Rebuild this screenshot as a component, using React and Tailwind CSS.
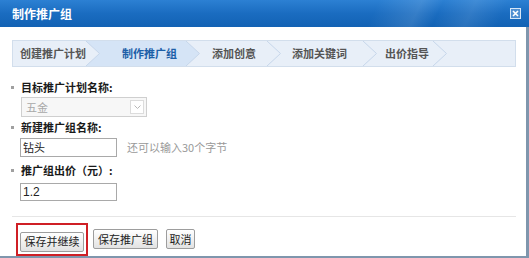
import React from "react";

const steps = [
  { label: "创建推广计划", width: 73, pad: 7 },
  { label: "制作推广组", width: 86, pad: 22 },
  { label: "添加创意", width: 67, pad: 12 },
  { label: "添加关键词", width: 82, pad: 11 },
  { label: "出价指导", width: 56, pad: 8 },
];

const ACTIVE = 1;

function Chevron({ left, right }) {
  return (
    <svg width="14" height="25" viewBox="0 0 14 25" className="shrink-0 block">
      <rect x="0" y="0" width="14" height="25" fill={right} />
      <path d="M0 0 L13.5 12.5 L0 25 Z" fill={left} />
      <path d="M0 0 L13.5 12.5 L0 25" fill="none" stroke="#c6d6ea" strokeWidth="1" />
    </svg>
  );
}

function Label({ children }) {
  return (
    <div className="flex items-center h-[16px] leading-none text-[11px] font-bold text-[#1a1a1a]">
      <span className="w-[3px] h-[3px] bg-[#a0a0a0] ml-[11px] mr-[7px]" />
      {children}
    </div>
  );
}

function Btn({ children, className = "" }) {
  return (
    <button
      className={`h-[20px] leading-none border border-[#9d9d9d] rounded-[2px] bg-gradient-to-b from-white to-[#e2e2e2] text-[11px] text-[#222] ${className}`}
    >
      {children}
    </button>
  );
}

export default function App() {
  const plain = "#e8eff8";
  const active = "#d5e4f6";
  return (
    <div
      className="w-[529px] h-[258px] bg-white overflow-hidden flex flex-col"
      style={{ fontFamily: '"Noto Sans CJK SC", "Noto Sans", sans-serif' }}
    >
      <div className="relative h-[27px] shrink-0 flex items-center justify-between pl-[12px] pr-[8px] bg-gradient-to-b from-[#2c80d3] via-[#1a6cc0] to-[#1262b4] overflow-hidden">
        <div className="absolute inset-0 bg-[linear-gradient(115deg,transparent_70%,rgba(255,255,255,0.12)_78%,transparent_82%,rgba(255,255,255,0.1)_88%,transparent_94%)]" />
        <span className="relative text-white text-[12px] font-bold leading-none">制作推广组</span>
        <span className="relative w-[11px] h-[11px] border border-[#d6e6f7] bg-[#4f8fd2] flex items-center justify-center">
          <svg width="7" height="7" viewBox="0 0 7 7">
            <path d="M1 1 L6 6 M6 1 L1 6" stroke="white" strokeWidth="1.6" />
          </svg>
        </span>
      </div>
      <div className="flex-1 flex flex-col border-r-[3px] border-b-[2px] border-[#7f96ad] pl-[12px] pr-[10px]">
        <div className="mt-[13px] h-[27px] border border-[#d2deec] bg-[#e8eff8] flex items-stretch overflow-hidden">
          {steps.map((s, i) => {
            const bg = i === ACTIVE ? active : plain;
            const next = i + 1 === ACTIVE ? active : plain;
            return (
              <React.Fragment key={s.label}>
                <div
                  className={`h-full flex items-center text-[11px] font-bold leading-none ${
                    i === ACTIVE ? "text-[#1d5fa8]" : "text-[#555]"
                  }`}
                  style={{ width: s.width, paddingLeft: s.pad, background: bg }}
                >
                  {s.label}
                </div>
                <Chevron left={bg} right={next} />
              </React.Fragment>
            );
          })}
        </div>

        <div className="mt-[12px] -ml-[12px] flex flex-col">
          <Label>目标推广计划名称:</Label>
          <div className="ml-[21px] mt-[2px] w-[126px] h-[20px] border border-[#cfcfcf] bg-[#f7f7f7] flex items-center justify-between pl-[4px] pr-[2px]">
            <span className="text-[11px] leading-none text-[#a8a8a8]">五金</span>
            <span className="w-[14px] h-[14px] border border-[#dcdcdc] bg-white flex items-center justify-center">
              <svg width="7" height="5" viewBox="0 0 7 5">
                <path d="M0.5 0.5 L3.5 3.5 L6.5 0.5" fill="none" stroke="#b8b8b8" strokeWidth="1" />
              </svg>
            </span>
          </div>
          <div className="mt-[2px]">
            <Label>新建推广组名称:</Label>
          </div>
          <div className="ml-[20px] mt-[3px] flex items-center">
            <div className="w-[97px] h-[19px] border border-[#a9a9a9] bg-white text-[11px] leading-none text-[#222] flex items-center pl-[2px]">
              钻头
            </div>
            <span className="ml-[10px] text-[11px] leading-none text-[#999]">还可以输入30个字节</span>
          </div>
          <div className="mt-[5px]">
            <Label>推广组出价（元）:</Label>
          </div>
          <div className="ml-[20px] mt-[5px]">
            <div
              className="w-[97px] h-[18px] border border-[#a9a9a9] bg-white text-[12px] leading-none text-[#222] flex items-center pl-[2px]"
              style={{ fontFamily: '"Liberation Sans", sans-serif' }}
            >
              1.2
            </div>
          </div>
        </div>

        <div className="mt-[15px] border-t border-[#e6e6e6]" />

        <div className="mt-[6px] flex items-center">
          <div className="ml-[4px] border-2 border-[#cf1f25] p-[2px]">
            <Btn className="w-[64px]">保存并继续</Btn>
          </div>
          <Btn className="ml-[5px] w-[65px]">保存推广组</Btn>
          <Btn className="ml-[8px] w-[29px]">取消</Btn>
        </div>
      </div>
    </div>
  );
}
